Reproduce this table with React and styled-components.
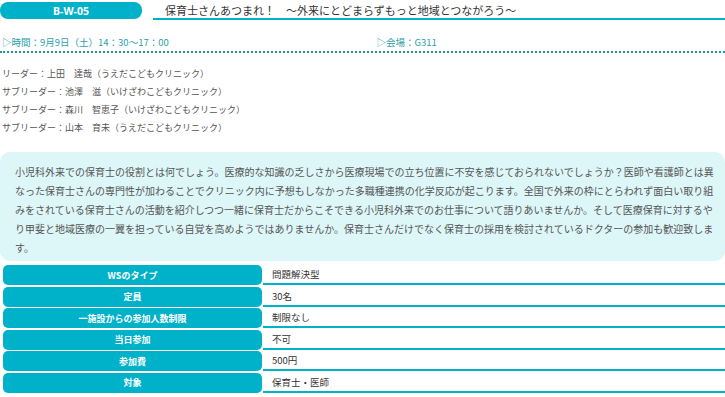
import styled, { createGlobalStyle } from 'styled-components'

const teal = '#00b2c9'

const GlobalStyle = createGlobalStyle`
    body {
        margin: 0;
        background: #fff;
        font-family: "Noto Sans CJK JP", "Noto Sans", sans-serif;
    }
`

const leaders = [
    'リーダー：上田　達哉（うえだこどもクリニック）',
    'サブリーダー：池澤　滋（いけざわこどもクリニック）',
    'サブリーダー：森川　智恵子（いけざわこどもクリニック）',
    'サブリーダー：山本　育未（うえだこどもクリニック）',
]

const details = [
    ['WSのタイプ', '問題解決型'],
    ['定員', '30名'],
    ['一施設からの参加人数制限', '制限なし'],
    ['当日参加', '不可'],
    ['参加費', '500円'],
    ['対象', '保育士・医師'],
]

const intro = '小児科外来での保育士の役割とは何でしょう。医療的な知識の乏しさから医療現場での立ち位置に不安を感じておられないでしょうか？医師や看護師とは異なった保育士さんの専門性が加わることでクリニック内に予想もしなかった多職種連携の化学反応が起こります。全国で外来の枠にとらわれず面白い取り組みをされている保育士さんの活動を紹介しつつ一緒に保育士だからこそできる小児科外来でのお仕事について語りあいませんか。そして医療保育に対するやり甲斐と地域医療の一翼を担っている自覚を高めようではありませんか。保育士さんだけでなく保育士の採用を検討されているドクターの参加も歓迎致します。'

export default function App() {
    return (
        <Page>
            <GlobalStyle />
            <Header>
                <Badge>B-W-05</Badge>
                <Title>保育士さんあつまれ！　〜外来にとどまらずもっと地域とつながろう〜</Title>
            </Header>
            <Meta>
                <MetaItem>▷時間：9月9日（土）14：30〜17：00</MetaItem>
                <MetaItem $indent>▷会場：G311</MetaItem>
            </Meta>
            <Leaders>
                {leaders.map((l) => <li key={l}>{l}</li>)}
            </Leaders>
            <Intro>{intro}</Intro>
            <Details>
                {details.map(([label, value]) => (
                    <Row key={label}>
                        <Label>{label}</Label>
                        <Value>{value}</Value>
                    </Row>
                ))}
            </Details>
        </Page>
    )
}

const Page = styled.div`
    width: 725px;
    padding-top: 2px;
`
const Header = styled.div`
    display: flex;
    align-items: stretch;
`
const Badge = styled.div`
    width: 142px;
    height: 17px;
    border-radius: 8px;
    background: ${teal};
    color: #fff;
    font-family: "Noto Sans", sans-serif;
    font-weight: 700;
    font-size: 10.5px;
    display: flex;
    align-items: center;
    justify-content: center;
`
const Title = styled.h1`
    flex: 1;
    margin: 0 0 0 11px;
    padding-left: 12px;
    border-bottom: 2px solid ${teal};
    font-size: 11px;
    font-weight: 400;
    line-height: 16px;
    color: #333;
`
const Meta = styled.div`
    display: grid;
    grid-template-columns: 1fr 1fr;
    margin-top: 15px;
    padding-bottom: 2px;
    border-bottom: 2px dotted #1f97a5;
`
const MetaItem = styled.div`
    padding-left: ${({ $indent }) => ($indent ? '14px' : '2px')};
    font-size: 9.5px;
    line-height: 14px;
    color: #2c9fad;
`
const Leaders = styled.ul`
    list-style: none;
    margin: 12px 0 0;
    padding: 0 0 0 2px;
    font-size: 9px;
    line-height: 18px;
    color: #555;
`
const Intro = styled.p`
    margin: 15px 0 0;
    padding: 10px 8px 4px 15px;
    border-radius: 10px;
    background: #ddf6f8;
    font-size: 10px;
    line-height: 19px;
    color: #555;
`
const Details = styled.div`
    display: flex;
    flex-direction: column;
    gap: 1.5px;
    margin-top: 4px;
`
const Row = styled.div`
    display: flex;
    height: 20px;
`
const Label = styled.div`
    width: 259px;
    margin-left: 3px;
    border-radius: 5px;
    background: ${teal};
    color: #fff;
    font-size: 9px;
    font-weight: 700;
    display: flex;
    align-items: center;
    justify-content: center;
`
const Value = styled.div`
    flex: 1;
    margin-left: 1px;
    padding-left: 9px;
    border-bottom: 2px solid ${teal};
    font-size: 9.5px;
    color: #333;
    display: flex;
    align-items: center;
`
